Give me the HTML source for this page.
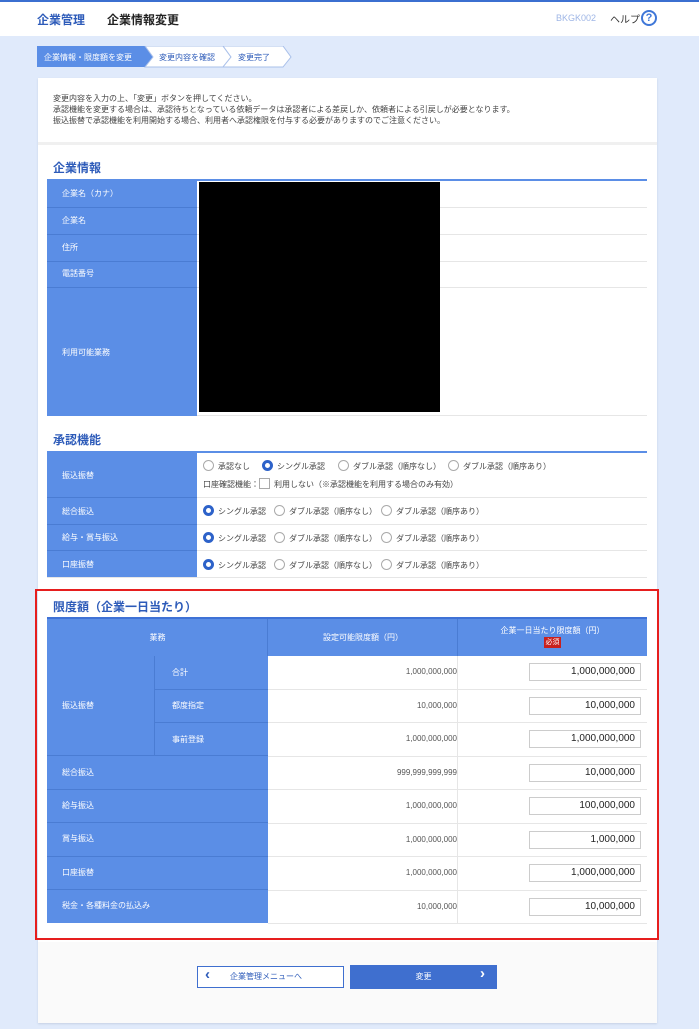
<!DOCTYPE html>
<html><head><meta charset="utf-8"><style>
*{margin:0;padding:0;box-sizing:border-box}
body{width:699px;height:1029px;background:#e0eafb;font-family:"Liberation Sans","Noto Sans CJK JP",sans-serif;position:relative;overflow:hidden;color:#333}
.a{position:absolute}
.hd{left:0;top:0;width:699px;height:36px;background:#fff;border-top:2px solid #3b6fd0}
.lb{background:#5b8ee6;color:#fff;font-size:8px}
.t{font-size:12px;font-weight:bold;color:#2d5bb9}
.ln{height:2px;background:#5b8ee6}
.rw{border-bottom:1px solid #e6e6e6}
.rad{display:inline-block;width:11px;height:11px;border:1px solid #aaa;border-radius:50%;vertical-align:-2px;margin-right:4px;background:#fff}
.on{border:3px solid #2d62c9;background:#fff;width:11px;height:11px}
.opt{font-size:8px;color:#444;position:absolute}
.inp{width:112px;height:18px;border:1px solid #ccc;background:#fff;font-size:10px;text-align:right;padding-right:5px;line-height:16px;color:#222}
.num{font-size:8px;color:#555;text-align:right}
</style></head><body>
<div class="a hd"></div>
<div class="a" style="left:37px;top:11px;font-size:12px;color:#2d5bb9;font-weight:bold">企業管理</div>
<div class="a" style="left:107px;top:11px;font-size:12px;color:#222;font-weight:bold">企業情報変更</div>
<div class="a" style="left:556px;top:13px;font-size:9px;color:#9fb6e6">BKGK002</div>
<div class="a" style="left:610px;top:11px;font-size:10px;color:#333">ヘルプ</div>
<div class="a" style="left:641px;top:10px;width:16px;height:16px;border:2px solid #3f77d8;border-radius:50%;color:#3f77d8;font-size:11px;font-weight:bold;text-align:center;line-height:12px">?</div>
<svg class="a" style="left:37px;top:46px" width="255" height="22">
<polygon points="0,0 108,0 116,11 108,21 0,21" fill="#5b8ee6"/>
<polygon points="108,0 186,0 194,11 186,21 108,21 116,11" fill="#fff" stroke="#a9c0ea"/>
<polygon points="186,0 246,0 254,11 246,21 186,21 194,11" fill="#fff" stroke="#a9c0ea"/>
<text x="7" y="14" font-size="8" fill="#fff" font-family="Noto Sans CJK JP">企業情報・限度額を変更</text>
<text x="122" y="14" font-size="8" fill="#2d5bb9" font-family="Noto Sans CJK JP">変更内容を確認</text>
<text x="201" y="14" font-size="8" fill="#2d5bb9" font-family="Noto Sans CJK JP">変更完了</text>
</svg>
<div class="a" style="left:38px;top:78px;width:619px;height:945px;background:#fff;box-shadow:0 1px 2px #c4d0e4"></div>
<div class="a" style="left:53px;top:93px;font-size:8px;line-height:11px;color:#444">変更内容を入力の上、「変更」ボタンを押してください。<br>承認機能を変更する場合は、承認待ちとなっている依頼データは承認者による差戻しか、依頼者による引戻しが必要となります。<br>振込振替で承認機能を利用開始する場合、利用者へ承認権限を付与する必要がありますのでご注意ください。</div>
<div class="a" style="left:38px;top:142px;width:619px;height:3px;background:#f0f0f0"></div>
<div class="a t" style="left:53px;top:159px">企業情報</div>
<div class="a ln" style="left:47px;top:179px;width:600px"></div>
<div class="a lb" style="left:47px;top:181px;width:150px;height:235px"></div>
<div class="a" style="left:47px;top:207px;width:150px;height:1px;background:#4a7cd3"></div>
<div class="a" style="left:47px;top:234px;width:150px;height:1px;background:#4a7cd3"></div>
<div class="a" style="left:47px;top:261px;width:150px;height:1px;background:#4a7cd3"></div>
<div class="a" style="left:47px;top:287px;width:150px;height:1px;background:#4a7cd3"></div>
<div class="a lb" style="left:62px;top:188px;background:none">企業名（カナ）</div>
<div class="a lb" style="left:62px;top:215px;background:none">企業名</div>
<div class="a lb" style="left:62px;top:242px;background:none">住所</div>
<div class="a lb" style="left:62px;top:268px;background:none">電話番号</div>
<div class="a lb" style="left:62px;top:347px;background:none">利用可能業務</div>
<div class="a" style="left:197px;top:207px;width:450px;height:1px;background:#e6e6e6"></div>
<div class="a" style="left:197px;top:234px;width:450px;height:1px;background:#e6e6e6"></div>
<div class="a" style="left:197px;top:261px;width:450px;height:1px;background:#e6e6e6"></div>
<div class="a" style="left:197px;top:287px;width:450px;height:1px;background:#e6e6e6"></div>
<div class="a" style="left:197px;top:415px;width:450px;height:1px;background:#e6e6e6"></div>
<div class="a" style="left:199px;top:182px;width:241px;height:230px;background:#000"></div>

<div class="a t" style="left:53px;top:431px">承認機能</div>
<div class="a ln" style="left:47px;top:451px;width:600px"></div>
<div class="a lb" style="left:47px;top:453px;width:150px;height:125px"></div>
<div class="a" style="left:47px;top:497px;width:600px;height:1px;background:#e6e6e6"></div>
<div class="a" style="left:47px;top:524px;width:600px;height:1px;background:#e6e6e6"></div>
<div class="a" style="left:47px;top:550px;width:600px;height:1px;background:#e6e6e6"></div>
<div class="a" style="left:47px;top:577px;width:600px;height:1px;background:#e6e6e6"></div>
<div class="a" style="left:47px;top:497px;width:150px;height:1px;background:#4a7cd3"></div>
<div class="a" style="left:47px;top:524px;width:150px;height:1px;background:#4a7cd3"></div>
<div class="a" style="left:47px;top:550px;width:150px;height:1px;background:#4a7cd3"></div>
<div class="a lb" style="left:62px;top:470px;background:none">振込振替</div>
<div class="a lb" style="left:62px;top:506px;background:none">総合振込</div>
<div class="a lb" style="left:62px;top:532px;background:none">給与・賞与振込</div>
<div class="a lb" style="left:62px;top:559px;background:none">口座振替</div>
<div class="opt" style="left:203px;top:460px"><span class="rad"></span>承認なし</div>
<div class="opt" style="left:262px;top:460px"><span class="rad on"></span>シングル承認</div>
<div class="opt" style="left:338px;top:460px"><span class="rad"></span>ダブル承認（順序なし）</div>
<div class="opt" style="left:448px;top:460px"><span class="rad"></span>ダブル承認（順序あり）</div>
<div class="opt" style="left:203px;top:478px">口座確認機能：<span style="display:inline-block;width:11px;height:11px;border:1px solid #aaa;vertical-align:-2px;margin-right:4px"></span>利用しない（※承認機能を利用する場合のみ有効）</div>
<div class="opt" style="left:203px;top:505px"><span class="rad on"></span>シングル承認　<span class="rad"></span>ダブル承認（順序なし）　<span class="rad"></span>ダブル承認（順序あり）</div>
<div class="opt" style="left:203px;top:532px"><span class="rad on"></span>シングル承認　<span class="rad"></span>ダブル承認（順序なし）　<span class="rad"></span>ダブル承認（順序あり）</div>
<div class="opt" style="left:203px;top:559px"><span class="rad on"></span>シングル承認　<span class="rad"></span>ダブル承認（順序なし）　<span class="rad"></span>ダブル承認（順序あり）</div>

<div class="a" style="left:35px;top:589px;width:624px;height:351px;border:2px solid #e61e1e"></div>
<div class="a t" style="left:53px;top:598px">限度額（企業一日当たり）</div>
<div class="a lb" style="left:47px;top:617px;width:600px;height:39px;border-top:2px solid #3f72d6"></div>
<div class="a" style="left:267px;top:619px;width:1px;height:37px;background:#4a7cd3"></div>
<div class="a" style="left:457px;top:619px;width:1px;height:37px;background:#4a7cd3"></div>
<div class="a lb" style="left:47px;top:632px;width:221px;text-align:center;background:none">業務</div>
<div class="a lb" style="left:268px;top:632px;width:190px;text-align:center;background:none">設定可能限度額（円）</div>
<div class="a lb" style="left:458px;top:625px;width:189px;text-align:center;background:none">企業一日当たり限度額（円）</div>
<div class="a" style="left:544px;top:637px;width:17px;height:11px;background:#c8201e;color:#fff;font-size:7px;text-align:center;line-height:11px">必須</div>
<div class="a lb" style="left:47px;top:656px;width:221px;height:267px"></div>
<div class="a" style="left:154px;top:656px;width:1px;height:100px;background:#4a7cd3"></div>
<div class="a" style="left:154px;top:689px;width:114px;height:1px;background:#4a7cd3"></div>
<div class="a" style="left:154px;top:722px;width:114px;height:1px;background:#4a7cd3"></div>
<div class="a" style="left:47px;top:755px;width:221px;height:1px;background:#4a7cd3"></div>
<div class="a" style="left:47px;top:789px;width:221px;height:1px;background:#4a7cd3"></div>
<div class="a" style="left:47px;top:822px;width:221px;height:1px;background:#4a7cd3"></div>
<div class="a" style="left:47px;top:856px;width:221px;height:1px;background:#4a7cd3"></div>
<div class="a" style="left:47px;top:889px;width:221px;height:1px;background:#4a7cd3"></div>
<div class="a" style="left:457px;top:656px;width:1px;height:267px;background:#e6e6e6"></div>
<div class="a lb" style="left:172px;top:667px;background:none">合計</div>
<div class="a lb" style="left:172px;top:700px;background:none">都度指定</div>
<div class="a lb" style="left:172px;top:734px;background:none">事前登録</div>
<div class="a lb" style="left:62px;top:700px;background:none">振込振替</div>
<div class="a lb" style="left:62px;top:767px;background:none">総合振込</div>
<div class="a lb" style="left:62px;top:800px;background:none">給与振込</div>
<div class="a lb" style="left:62px;top:833px;background:none">賞与振込</div>
<div class="a lb" style="left:62px;top:867px;background:none">口座振替</div>
<div class="a lb" style="left:62px;top:900px;background:none">税金・各種料金の払込み</div>
<div class="a" style="left:268px;top:656px;width:379px">
<div class="rw" style="height:33.5px;position:relative"><div class="a num" style="right:190px;top:11px">1,000,000,000</div><div class="a inp" style="left:261px;top:7px">1,000,000,000</div></div>
<div class="rw" style="height:33.5px;position:relative"><div class="a num" style="right:190px;top:11px">10,000,000</div><div class="a inp" style="left:261px;top:7px">10,000,000</div></div>
<div class="rw" style="height:33.5px;position:relative"><div class="a num" style="right:190px;top:11px">1,000,000,000</div><div class="a inp" style="left:261px;top:7px">1,000,000,000</div></div>
<div class="rw" style="height:33.5px;position:relative"><div class="a num" style="right:190px;top:11px">999,999,999,999</div><div class="a inp" style="left:261px;top:7px">10,000,000</div></div>
<div class="rw" style="height:33.5px;position:relative"><div class="a num" style="right:190px;top:11px">1,000,000,000</div><div class="a inp" style="left:261px;top:7px">100,000,000</div></div>
<div class="rw" style="height:33.5px;position:relative"><div class="a num" style="right:190px;top:11px">1,000,000,000</div><div class="a inp" style="left:261px;top:7px">1,000,000</div></div>
<div class="rw" style="height:33.5px;position:relative"><div class="a num" style="right:190px;top:11px">1,000,000,000</div><div class="a inp" style="left:261px;top:7px">1,000,000,000</div></div>
<div class="rw" style="height:33.5px;position:relative"><div class="a num" style="right:190px;top:11px">10,000,000</div><div class="a inp" style="left:261px;top:7px">10,000,000</div></div>
</div>
<div class="a" style="left:38px;top:942px;width:619px;height:81px;background:#fafafa"></div>
<div class="a" style="left:197px;top:966px;width:147px;height:22px;border:1px solid #3f6fcf;background:#fff;color:#2d5bb9;font-size:8px;line-height:20px;padding-left:32px">企業管理メニューへ</div>
<div class="a" style="left:205px;top:966px;color:#2d5bb9;font-size:15px;font-weight:bold">‹</div>
<div class="a" style="left:350px;top:965px;width:147px;height:24px;background:#3f6fcf;color:#fff;font-size:8px;line-height:24px;text-align:center">変更</div>
<div class="a" style="left:480px;top:965px;color:#fff;font-size:15px;font-weight:bold">›</div>
</body></html>
